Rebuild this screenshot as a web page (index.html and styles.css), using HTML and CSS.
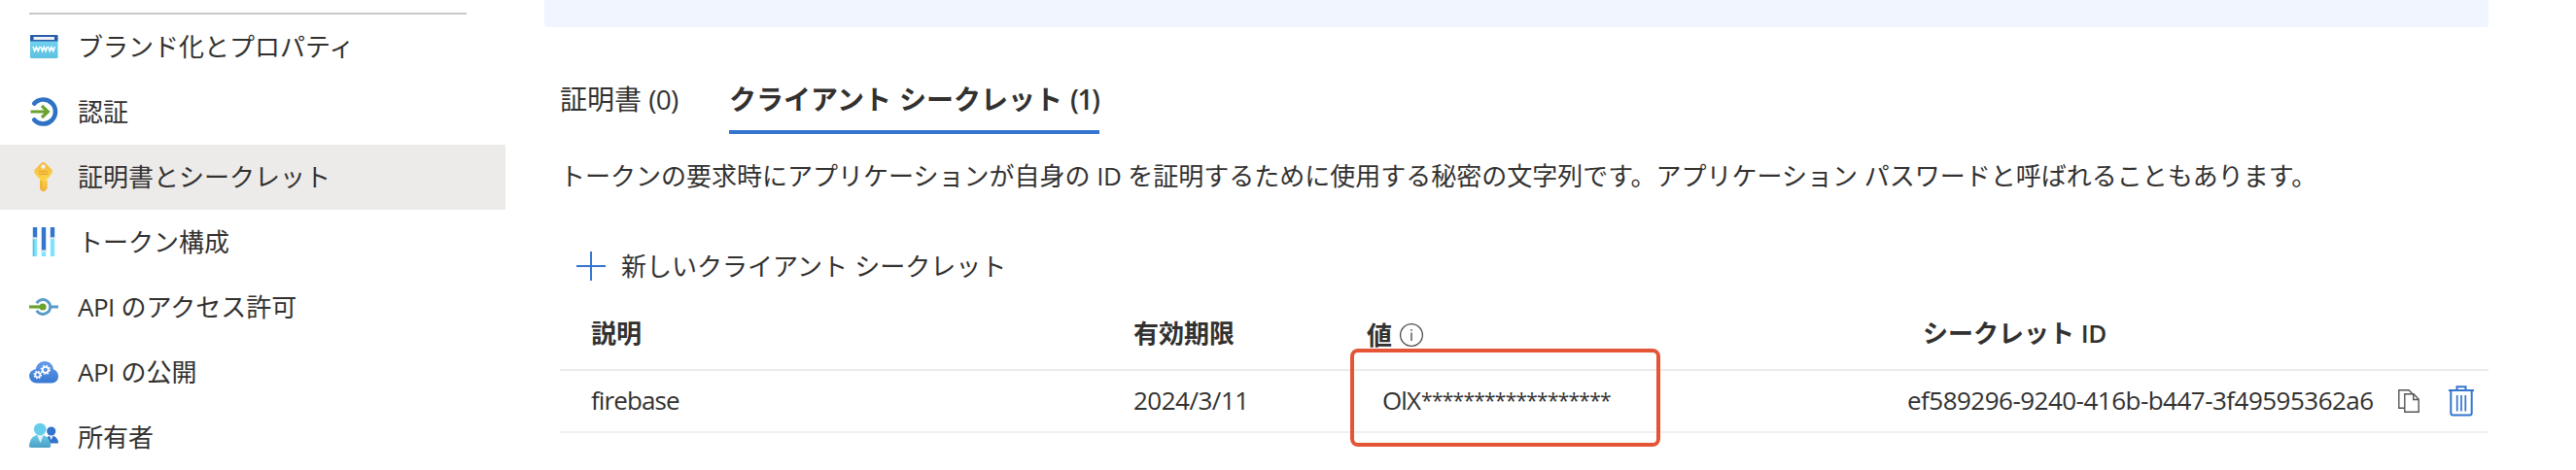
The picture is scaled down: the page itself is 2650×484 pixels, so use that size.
FILE: index.html
```html
<!DOCTYPE html>
<html lang="ja">
<head>
<meta charset="utf-8">
<title>証明書とシークレット</title>
<link rel="stylesheet" href="styles.css">
</head>
<body>
<div class="app">
  <nav class="sidebar">
    <hr class="divider">
    <a class="item"><svg class="icon" viewBox="0 0 30 30"><defs><linearGradient id="web" x1="0" y1="0" x2="0" y2="1"><stop offset="0" stop-color="#76d8f5"/><stop offset="1" stop-color="#5cc0e0"/></linearGradient></defs><rect x="1" y="3" width="28.500" height="24" rx="1" fill="url(#web)"/><path d="M1 9.500V4a1 1 0 0 1 1-1h26.500a1 1 0 0 1 1 1v5.500z" fill="#2a5da8"/><rect x="4.500" y="5" width="21.500" height="3" rx=".5" fill="#eef1f5"/><path d="M4 15l1.600 4.600L7.500 15.500l1.800 4.100L11 15M12 15l1.600 4.600 1.700-4.100 1.800 4.100L18.700 15M19.700 15l1.600 4.600 1.700-4.100 1.800 4.100L26.400 15" fill="none" stroke="#fff" stroke-width="1.500"/></svg><span>ブランド化とプロパティ</span></a>
    <a class="item"><svg class="icon" viewBox="0 0 30 30"><path d="M5.200 6.600A12.500 12.500 0 1 1 5.200 23.400" fill="none" stroke="#2f72c4" stroke-width="4.600" stroke-linecap="round"/><path d="M1.500 15H18M13 9l6.300 6-6.300 6" fill="none" stroke="#6ba32e" stroke-width="3.200"/></svg><span>認証</span></a>
    <a class="item selected"><svg class="icon" viewBox="0 0 30 30"><defs><linearGradient id="key" x1="0" y1="0" x2="0" y2="1"><stop offset="0" stop-color="#f3b73f"/><stop offset=".55" stop-color="#fbd449"/><stop offset="1" stop-color="#efac3c"/></linearGradient></defs><path d="M12.500.8Q14.500-.8 16.500.8l6.700 6.800q1.300 1.400.4 3.300l-2.800 4.300q-.8 1.300-2.600 1.800v1.800l1.200 1.400-1.200 1.400 1.200 1.500-1.200 1.500.8 1.600-.8 1.300-3 3.300q-.7.600-1.400 0l-2.800-3.200V17q-1.800-.5-2.600-1.800l-2.800-4.300q-.9-1.900.4-3.300z" fill="url(#key)"/><circle cx="14.500" cy="4.600" r="2.300" fill="#f1efec"/><path d="M10 9.700h9.200M10 12.200h9.200" stroke="#e69a32" stroke-width="1.100"/><path d="M12.400 19v8" stroke="#eda53a" stroke-width="1.300"/></svg><span>証明書とシークレット</span></a>
    <a class="item"><svg class="icon" viewBox="0 0 30 30"><path d="M6 0v30M15 0v30M24 0v30" stroke="#7de3fb" stroke-width="4.300"/><path d="M4.500 12v18" stroke="#5ab8d8" stroke-width="1.500"/><path d="M6 0v11M15 0v25M24 0v11" stroke="#3475cf" stroke-width="4.300"/><path d="M3.300 11.300h5.400M12.300 24.500h5.400M21.300 11.300h5.400" stroke="#dfe5ea" stroke-width="2"/></svg><span>トークン構成</span></a>
    <a class="item"><svg class="icon" viewBox="0 0 30 30"><path d="M7.700 11.200a7.500 7.500 0 1 1 0 7.600M22 15h8" fill="none" stroke="#589bc9" stroke-width="2.900"/><path d="M0 15h14" stroke="#6ba32e" stroke-width="3.200"/><circle cx="14" cy="15" r="3.600" fill="#6ba32e"/></svg><span><b class="latin">API</b> のアクセス許可</span></a>
    <a class="item"><svg class="icon" viewBox="0 0 30 30"><defs><linearGradient id="cloud" x1="0" y1="0" x2="0" y2="1"><stop offset="0" stop-color="#669cea"/><stop offset="1" stop-color="#3779d2"/></linearGradient></defs><path d="M7.500 26.500A7.500 7.500 0 0 1 0 19.500c0-4 3-6.800 6.700-7.200C7.800 7 11.500 4 16 4c5 0 8.500 3.500 9 8.500 3 .7 5 3.500 5 7 0 4-3 7-7 7z" fill="url(#cloud)"/><g fill="none" stroke="#fff"><circle cx="16.800" cy="12.800" r="3" stroke-width="1.800"/><circle cx="16.800" cy="12.800" r="4.300" stroke-width="1.800" stroke-dasharray="1.690"/><circle cx="8.800" cy="18" r="2.500" stroke-width="1.600"/><circle cx="8.800" cy="18" r="3.600" stroke-width="1.500" stroke-dasharray="1.414"/></g></svg><span><b class="latin">API</b> の公開</span></a>
    <a class="item"><svg class="icon" viewBox="0 0 30 30"><defs><linearGradient id="user" x1="0" y1="0" x2="0" y2="1"><stop offset="0" stop-color="#69cdeb"/><stop offset="1" stop-color="#4b9fc4"/></linearGradient></defs><circle cx="22.700" cy="9" r="4.600" fill="#3273cb"/><path d="M17 21.500c0-5 2-8 5.700-8s6.300 2.500 7.300 6.500q.4 1.500-1.400 1.500z" fill="#3273cb"/><path d="M20.500 13.500h4.400L22.700 18z" fill="#dceaf6"/><path d="M2 26q-2.200 0-2-2c.6-6.400 4-11.500 11-11.500S21.500 17.600 22.300 24q.2 2-2 2z" fill="url(#user)"/><path d="M8 12.800h7L11.500 21z" fill="#e4f1f8"/><circle cx="11.200" cy="7" r="6.300" fill="#68cdeb"/></svg><span>所有者</span></a>
  </nav>
  <main class="content">
    <div class="banner"></div>
    <div class="tabs">
      <div class="tab">証明書 <span class="count">(0)</span></div>
      <div class="tab active">クライアント シークレット <span class="count">(1)</span></div>
    </div>
    <p class="description">トークンの要求時にアプリケーションが自身の <span class="latin">ID</span> を証明するために使用する秘密の文字列です。アプリケーション パスワードと呼ばれることもあります。</p>
    <div class="command"><svg class="plus" viewBox="0 0 30 30"><path d="M0 15h30M15 0v30" stroke="#3375cf" stroke-width="2"/></svg><span>新しいクライアント シークレット</span></div>
    <div class="table">
      <div class="row head">
        <div>説明</div>
        <div>有効期限</div>
        <div class="value-head">値<svg class="info" viewBox="0 0 26 26"><circle cx="13" cy="13" r="11.400" fill="none" stroke="#505050" stroke-width="1.300"/><path d="M13 10.500v8.500M13 7v1.800" stroke="#505050" stroke-width="1.400"/></svg></div>
        <div class="id-head">シークレット <span class="latin">ID</span></div>
      </div>
      <div class="row data">
        <div class="name">firebase</div>
        <div class="date">2024/3/11</div>
        <div class="secret">OlX<span class="mask">******************</span><div class="highlight"></div></div>
        <div class="id"><span class="guid">ef589296-9240-416b-b447-3f49595362a6</span>
          <svg class="copy" viewBox="0 0 22 24"><path d="M7 19.200H.8V.8H11l3.500 3.500M6.800 4.800h9.200l5.200 5.400v13H6.800zM15.700 5v5.500h5.500" fill="none" stroke="#555" stroke-width="1.400"/></svg>
          <svg class="trash" viewBox="0 0 26 32"><path d="M0 5h26M8.500 5V1.200h9V5M2.300 5v23.500q0 2 2 2h17.400q2 0 2-2V5" fill="none" stroke="#3375cf" stroke-width="2"/><path d="M8.700 10v16.500M13 10v16.500M17.300 10v16.500" stroke="#3375cf" stroke-width="1.700"/></svg>
        </div>
      </div>
    </div>
  </main>
</div>
</body>
</html>
```
FILE: styles.css
```css
* { box-sizing: border-box; }
body {
  margin: 0;
  background: #fff;
  color: #323130;
  font: 26px/36px "Open Sans", "Noto Sans CJK JP", sans-serif;
}
.app { display: flex; height: 484px; overflow: hidden; white-space: nowrap; }
.sidebar { width: 520px; padding-top: 13px; }
.divider { width: 450px; height: 2px; margin: 0 0 0 30px; border: 0; background: #c8c8c8; }
.item { display: flex; align-items: center; gap: 20px; height: 67px; padding: 0 0 1px 30px; }
.item.selected { background: #edebe9; }
.item span { padding-bottom: 1px; }
.icon { width: 30px; height: 30px; flex: none; }
.latin { font-weight: inherit; letter-spacing: -0.5px; }
.content { width: 2000px; margin-left: 40px; }
.banner { height: 28px; background: #f0f5ff; border-radius: 0 0 4px 4px; }
.tabs { display: flex; gap: 51px; padding: 54px 0 0 16px; font-size: 28px; line-height: 40px; }
.tab { width: 123px; height: 56px; }
.tab.active { width: 381px; font-weight: 600; word-spacing: 0.8px; border-bottom: 4px solid #3375cf; }
.count { letter-spacing: -0.8px; }
.active .count { letter-spacing: -1.5px; }
.description { margin: 25px 0 0; padding-left: 16px; }
.command { display: flex; align-items: center; gap: 16px; height: 36px; margin-top: 57px; padding-left: 33px; word-spacing: 0.6px; }
.plus { width: 30px; height: 30px; }
.table { margin: 14px 0 0 16px; }
.row {
  display: grid;
  grid-template-columns: 558px 240px 572px 1fr;
  align-items: center;
  padding-left: 32px;
}
.head { height: 76px; font-weight: 600; border-bottom: 2px solid #ebebe9; }
.value-head { display: flex; align-items: center; gap: 7px; padding-top: 3px; }
.info { width: 26px; height: 26px; }
.data { height: 64px; border-bottom: 2px solid #f0f0f0; }
.name { padding-bottom: 2px; letter-spacing: -0.9px; }
.date { padding-bottom: 2px; letter-spacing: -0.5px; }
.secret { position: relative; padding: 0 0 2px 16px; letter-spacing: -0.9px; }
.mask { margin-left: 1px; font-size: 21px; line-height: 1; letter-spacing: -0.75px; vertical-align: 2px; }
.highlight {
  position: absolute;
  left: -17px;
  top: -35px;
  width: 319px;
  height: 101px;
  border: 4px solid #e35535;
  border-radius: 8px;
}
.id { display: flex; align-items: center; margin-left: -16px; }
.guid { width: 505px; padding-bottom: 2px; letter-spacing: -0.52px; }
.copy { width: 22px; height: 24px; margin-right: 30px; }
.trash { width: 26px; height: 32px; }
```
